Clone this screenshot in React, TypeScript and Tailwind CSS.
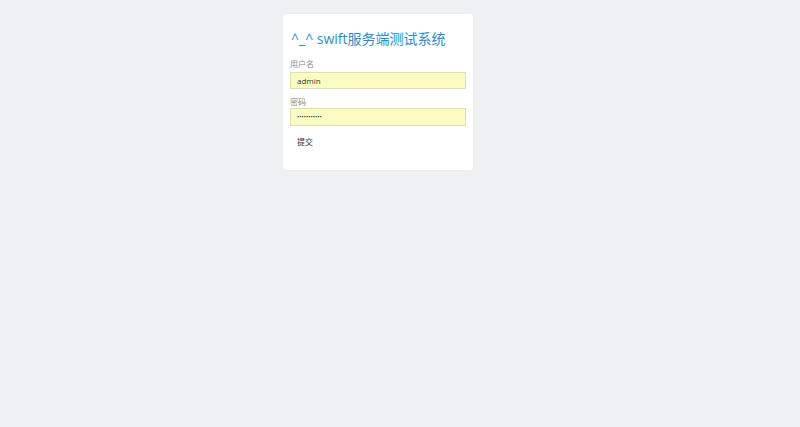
import React from "react";

const App: React.FC = () => {
  return (
    <div className="min-h-[427px] w-full bg-[#eef0f1] pt-[14px] font-['Open_Sans','Noto_Sans_CJK_SC',sans-serif]">
      <div className="ml-[283px] w-[190px] rounded-[3px] bg-white px-[7px] pt-[15px] pb-[19px] shadow-[0_0_1px_rgba(0,0,0,0.08)]">
        <h1 className="whitespace-nowrap pl-[1px] text-[14px] leading-[20px] text-[#2a8ccd]">
          ^_^ swift服务端测试系统
        </h1>
        <form className="mt-[10px]" onSubmit={(e) => e.preventDefault()}>
          <label className="block text-[8px] leading-[10px] text-[#8a8a8a]">用户名</label>
          <input
            className="mt-[3px] block h-[17px] w-full border border-[#dfe0ad] bg-[#fafcc2] px-[6px] text-[8px] text-[#333] outline-none"
            defaultValue="admin"
          />
          <label className="mt-[8px] block text-[8px] leading-[10px] text-[#8a8a8a]">密码</label>
          <input
            type="password"
            className="mt-[1px] block h-[18px] w-full border border-[#dfe0ad] bg-[#fafcc2] px-[6px] text-[6px] text-[#333] outline-none"
            defaultValue="12345678901"
          />
          <button
            type="submit"
            className="mt-[10px] ml-[7px] text-[8px] leading-[12px] text-[#333]"
          >
            提交
          </button>
        </form>
      </div>
    </div>
  );
};

export default App;
